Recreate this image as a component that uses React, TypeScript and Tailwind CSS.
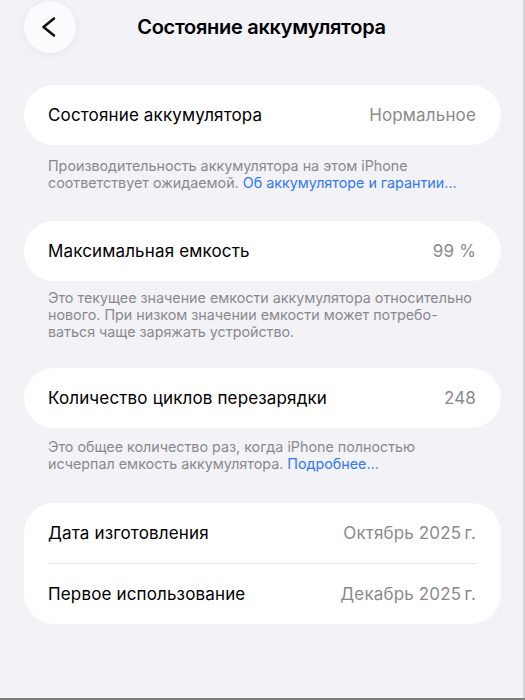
import React from "react";

const font = { fontFamily: 'Inter, "Noto Sans", sans-serif' };

function Row({ label, value }: { label: string; value: string }) {
  return (
    <div className="flex h-[60px] items-center justify-between pl-[24px] pr-[25px]">
      <span className="text-[17px] leading-none text-black tracking-[0.15px]">{label}</span>
      <span className="text-[17px] leading-none text-[#8a8a8e] tracking-[0.15px]">{value}</span>
    </div>
  );
}

const foot = "ml-[48px] mr-[30px] text-[14.3px] leading-[17px] text-[#8a8a8e] whitespace-nowrap";

export default function App() {
  return (
    <div className="w-[525px] h-[700px] flex flex-col overflow-hidden" style={font}>
      <div className="flex h-[698px] shrink-0">
        <div className="w-[523px] h-[698px] bg-[#f2f2f7] flex flex-col shrink-0">
          <div className="relative h-[54px] flex items-center justify-center shrink-0">
            <div className="absolute left-[24px] top-[1px] w-[52px] h-[52px] rounded-full bg-[#fbfbfd] shadow-[0_1px_8px_rgba(0,0,0,0.06)] flex items-center justify-center">
              <svg width="52" height="52" viewBox="0 0 52 52" fill="none">
                <path d="M30 17.5 L19.5 26 L30 34.5" stroke="#111" strokeWidth="2.6" strokeLinecap="round" strokeLinejoin="round" />
              </svg>
            </div>
            <h1 className="text-[20px] font-semibold text-black tracking-[-0.3px] leading-none">
              Состояние аккумулятора
            </h1>
          </div>

          <div className="ml-[24px] mr-[22px] mt-[31px] rounded-[30px] bg-white">
            <Row label="Состояние аккумулятора" value="Нормальное" />
          </div>
          <p className={`${foot} mt-[12px]`}>
            Производительность аккумулятора на этом iPhone
            <br />
            соответствует ожидаемой.{" "}
            <span className="text-[#3478f6]">Об аккумуляторе и гарантии…</span>
          </p>

          <div className="ml-[24px] mr-[22px] mt-[30px] rounded-[30px] bg-white">
            <Row label="Максимальная емкость" value="99 %" />
          </div>
          <p className={`${foot} mt-[8px]`}>
            Это текущее значение емкости аккумулятора относительно
            <br />
            нового. При низком значении емкости может потребо-
            <br />
            ваться чаще заряжать устройство.
          </p>

          <div className="ml-[24px] mr-[22px] mt-[28px] rounded-[30px] bg-white">
            <Row label="Количество циклов перезарядки" value="248" />
          </div>
          <p className={`${foot} mt-[10px]`}>
            Это общее количество раз, когда iPhone полностью
            <br />
            исчерпал емкость аккумулятора.{" "}
            <span className="text-[#3478f6]">Подробнее…</span>
          </p>

          <div className="ml-[24px] mr-[22px] mt-[31px] rounded-[30px] bg-white">
            <Row label="Дата изготовления" value={"Октябрь 2025\u2009г."} />
            <div className="ml-[24px] mr-[25px] h-px bg-[#e3e3e8]" />
            <Row label="Первое использование" value={"Декабрь 2025\u2009г."} />
          </div>
        </div>
        <div className="w-[2px] bg-[#d4d4d8]" />
      </div>
      <div className="h-[2px] bg-[#7f7f7f]" />
    </div>
  );
}
